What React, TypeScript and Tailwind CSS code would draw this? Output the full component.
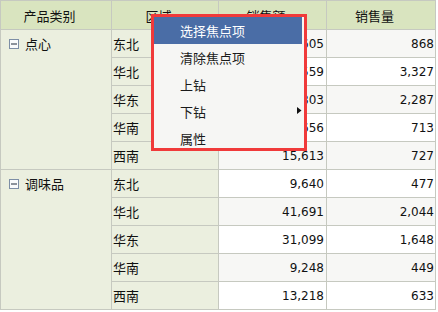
type Row = { region: string; amount: string; qty: string };

const groups: { name: string; rows: Row[] }[] = [
  {
    name: "点心",
    rows: [
      { region: "东北", amount: "14,605", qty: "868" },
      { region: "华北", amount: "16,559", qty: "3,327" },
      { region: "华东", amount: "12,803", qty: "2,287" },
      { region: "华南", amount: "11,656", qty: "713" },
      { region: "西南", amount: "15,613", qty: "727" },
    ],
  },
  {
    name: "调味品",
    rows: [
      { region: "东北", amount: "9,640", qty: "477" },
      { region: "华北", amount: "41,691", qty: "2,044" },
      { region: "华东", amount: "31,099", qty: "1,648" },
      { region: "华南", amount: "9,248", qty: "449" },
      { region: "西南", amount: "13,218", qty: "633" },
    ],
  },
];

const menuItems = ["选择焦点项", "清除焦点项", "上钻", "下钻", "属性"];

function MinusBox() {
  return (
    <svg width="10" height="10" viewBox="0 0 10 10" className="shrink-0">
      <rect x="0.5" y="0.5" width="9" height="9" fill="#fafbfc" stroke="#7d8ea6" />
      <line x1="2" y1="5" x2="8" y2="5" stroke="#1f2a3a" strokeWidth="1" />
    </svg>
  );
}

export default function App() {
  const cjk = "font-['Noto_Sans_CJK_SC',sans-serif]";
  const num = "font-['DejaVu_Sans',sans-serif] text-[12px]";

  return (
    <div className={`relative w-[438px] h-[312px] bg-white text-[13px] text-[#111] ${cjk}`}>
      <table className="table-fixed border-collapse w-[435px]">
        <colgroup>
          <col className="w-[111px]" />
          <col className="w-[107px]" />
          <col className="w-[108px]" />
          <col className="w-[109px]" />
        </colgroup>
        <thead>
          <tr className="h-[29px] bg-[#d9e4bf]">
            {["产品类别", "区域", "销售额", "销售量"].map((h) => (
              <th
                key={h}
                className="border border-[#c6c9c0] font-normal text-center pr-[13px] p-0 leading-none"
              >
                {h}
              </th>
            ))}
          </tr>
        </thead>
        <tbody>
          {groups.map((g, gi) =>
            g.rows.map((r, i) => {
              const shade = (gi * 5 + i) % 2 === 0 ? "bg-[#f7f7f5]" : "bg-white";
              return (
                <tr key={g.name + r.region} className="h-[28px]">
                  {i === 0 && (
                    <td
                      rowSpan={5}
                      className="border border-[#c6c9c0] bg-[#ebefdf] align-top p-0"
                    >
                      <div className="flex items-center gap-[6px] pl-[8px] pt-[7px] leading-none">
                        <MinusBox />
                        <span>{g.name}</span>
                      </div>
                    </td>
                  )}
                  <td className="border border-[#c6c9c0] bg-[#ebefdf] pl-[1px] p-0 leading-none">
                    {r.region}
                  </td>
                  <td className={`border border-[#c6c9c0] ${shade} text-right pr-[2px] p-0 ${num}`}>
                    {r.amount}
                  </td>
                  <td className={`border border-[#c6c9c0] ${shade} text-right pr-[1px] p-0 ${num}`}>
                    {r.qty}
                  </td>
                </tr>
              );
            })
          )}
        </tbody>
      </table>

      {/* context menu over the grid */}
      <div className="absolute left-[151px] top-[14px] w-[156px] h-[137px] border-[3px] border-[#f03a3a] bg-[#f6f6f4] overflow-hidden">
        {menuItems.map((m, i) => (
          <div
            key={m}
            className={`relative flex items-center h-[27px] pl-[26px] leading-none ${
              i === 0 ? "bg-[#4a6da6] text-white mr-[2px]" : "text-[#1a1a1a]"
            }`}
          >
            {m}
            {m === "下钻" && (
              <svg
                width="5"
                height="7"
                viewBox="0 0 5 7"
                className="absolute right-[2px] top-[9px]"
              >
                <path d="M0 0 L4.5 3.5 L0 7 Z" fill="#111" />
              </svg>
            )}
          </div>
        ))}
      </div>
    </div>
  );
}
